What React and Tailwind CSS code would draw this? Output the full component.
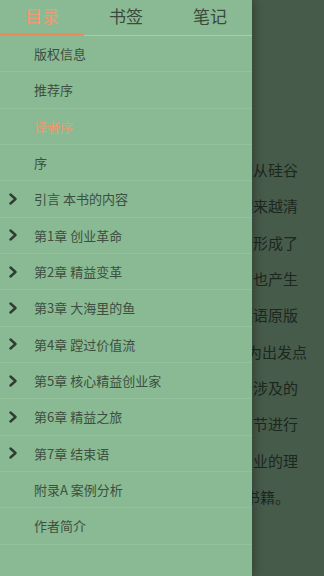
import React from "react";

const tabs = ["目录", "书签", "笔记"];

const chapters = [
  { title: "版权信息" },
  { title: "推荐序" },
  { title: "译者序", active: true },
  { title: "序" },
  { title: "引言 本书的内容", sub: true },
  { title: "第1章 创业革命", sub: true },
  { title: "第2章 精益变革", sub: true },
  { title: "第3章 大海里的鱼", sub: true },
  { title: "第4章 蹚过价值流", sub: true },
  { title: "第5章 核心精益创业家", sub: true },
  { title: "第6章 精益之旅", sub: true },
  { title: "第7章 结束语", sub: true },
  { title: "附录A 案例分析" },
  { title: "作者简介" },
];

// 뒤쪽 본문 줄 (오른쪽 끝만 보임)
const lines = [
  { text: "的创业者们从硅谷", pr: "pr-[26px]" },
  { text: "的理念越来越清", pr: "pr-[26px]" },
  { text: "方法也逐渐形成了", pr: "pr-[26px]" },
  { text: "行业，也产生", pr: "pr-[26px]" },
  { text: "出版了英语原版", pr: "pr-[26px]" },
  { text: "本书以用户为出发点", pr: "pr-[17px]" },
  { text: "本书所涉及的", pr: "pr-[26px]" },
  { text: "对每个章节进行", pr: "pr-[26px]" },
  { text: "精益创业的理", pr: "pr-[26px]" },
  { text: "的一本书籍。", pr: "pr-[34px]" },
];

const Chevron = () => (
  <svg width="10" height="12" viewBox="0 0 10 12" className="shrink-0">
    <path d="M2.5 1.5 L7.5 6 L2.5 10.5" fill="none" stroke="#2f3d32" strokeWidth="2.4" strokeLinecap="round" strokeLinejoin="round" />
  </svg>
);

const App = () => {
  return (
    <div
      className="relative w-[324px] h-[576px] overflow-hidden bg-[#475b4a]"
      style={{ fontFamily: '"Noto Sans CJK SC", "Noto Sans", sans-serif' }}
    >
      {/* 본문 */}
      <div className="pt-[152px] flex flex-col">
        {lines.map((l, i) => (
          <div
            key={i}
            className={`h-[36.35px] flex items-center justify-end whitespace-nowrap text-[15px] text-[#1c271e] ${l.pr}`}
          >
            {l.text}
          </div>
        ))}
      </div>

      {/* 목록 서랍 */}
      <div className="absolute left-0 top-0 bottom-0 w-[252px] bg-[#8aba93] shadow-[3px_0_8px_rgba(0,0,0,0.25)] flex flex-col">
        <div className="relative h-[36px] flex border-b border-[#a6cfae]">
          {tabs.map((t, i) => (
            <div
              key={t}
              className={`flex-1 flex items-center justify-center text-[17px] pb-[3px] ${
                i === 0 ? "text-[#ee9a72]" : "text-[#3a4a3d]"
              }`}
            >
              {t}
            </div>
          ))}
          <div className="absolute left-0 bottom-[-1px] w-[84px] h-[3px] bg-[#ee8a5b]" />
        </div>
        {chapters.map((c, i) => (
          <div
            key={i}
            className="h-[36.35px] flex items-center border-b border-[#92c19b] text-[13px]"
          >
            <div className="w-[34px] pl-[8px] flex items-center">{c.sub && <Chevron />}</div>
            <span className={c.active ? "text-[#eb9a72]" : "text-[#3d4f41]"}>{c.title}</span>
          </div>
        ))}
      </div>
    </div>
  );
};

export default App;
